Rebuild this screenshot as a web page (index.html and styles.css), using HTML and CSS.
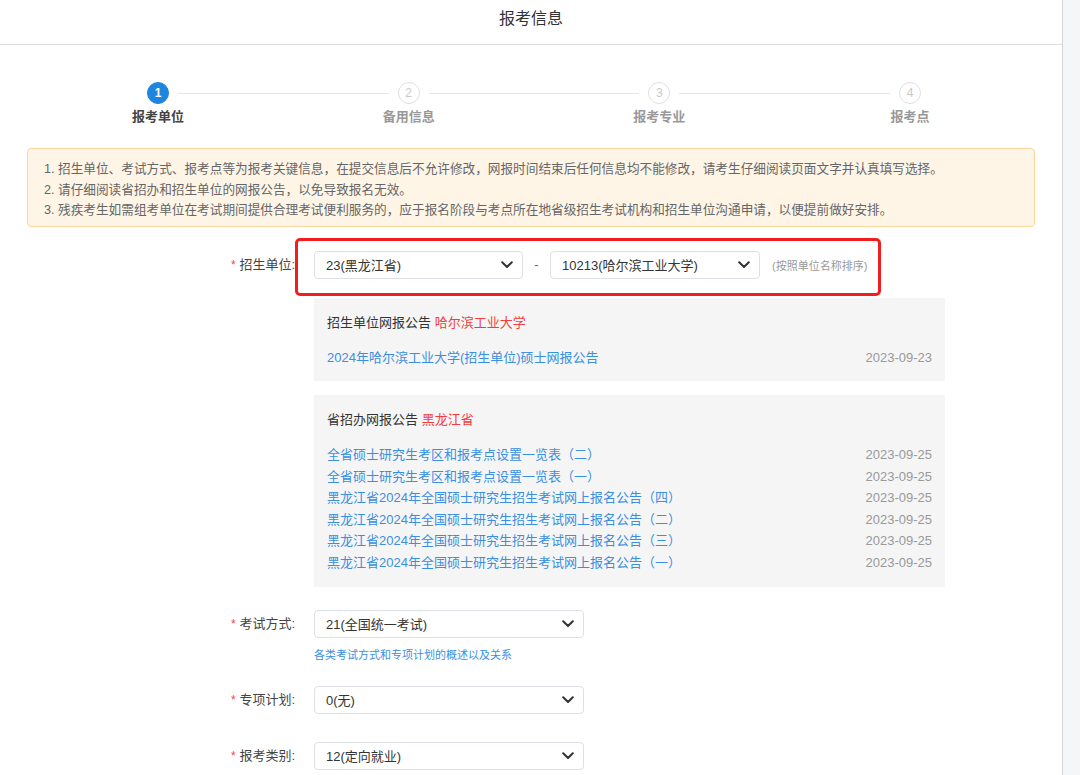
FILE: index.html
```html
<!DOCTYPE html>
<html lang="zh-CN">
<head>
<meta charset="utf-8">
<title>报考信息</title>
<link rel="stylesheet" href="styles.css">
</head>
<body>
<div class="shell">
  <div class="page">
    <header class="header">报考信息</header>

    <div class="steps">
      <div class="circle active">1</div>
      <div class="line"></div>
      <div class="circle">2</div>
      <div class="line"></div>
      <div class="circle">3</div>
      <div class="line"></div>
      <div class="circle">4</div>
      <div class="step-label active c1">报考单位</div>
      <div class="step-label c3">备用信息</div>
      <div class="step-label c5">报考专业</div>
      <div class="step-label c7">报考点</div>
    </div>

    <div class="notice">
      <p>1. 招生单位、考试方式、报考点等为报考关键信息，在提交信息后不允许修改，网报时间结束后任何信息均不能修改，请考生仔细阅读页面文字并认真填写选择。</p>
      <p>2. 请仔细阅读省招办和招生单位的网报公告，以免导致报名无效。</p>
      <p>3. 残疾考生如需组考单位在考试期间提供合理考试便利服务的，应于报名阶段与考点所在地省级招生考试机构和招生单位沟通申请，以便提前做好安排。</p>
    </div>

    <div class="form">
      <div class="row row-unit">
        <div class="label"><span class="req">*</span> 招生单位:</div>
        <div class="field inline">
          <div class="select s-prov"><span>23(黑龙江省)</span><svg class="chev" viewBox="0 0 12 8"><polyline points="1.2,1.2 6,6 10.8,1.2"/></svg></div>
          <span class="dash">-</span>
          <div class="select s-unit"><span>10213(哈尔滨工业大学)</span><svg class="chev" viewBox="0 0 12 8"><polyline points="1.2,1.2 6,6 10.8,1.2"/></svg></div>
          <span class="sort-hint">(按照单位名称排序)</span>
        </div>
        <div class="highlight"></div>
      </div>

      <div class="panels">
        <div class="panel">
          <div class="panel-title">招生单位网报公告 <span class="red">哈尔滨工业大学</span></div>
          <ul class="news">
            <li><a>2024年哈尔滨工业大学(招生单位)硕士网报公告</a><span class="date">2023-09-23</span></li>
          </ul>
        </div>
        <div class="panel">
          <div class="panel-title">省招办网报公告 <span class="red">黑龙江省</span></div>
          <ul class="news">
            <li><a>全省硕士研究生考区和报考点设置一览表（二）</a><span class="date">2023-09-25</span></li>
            <li><a>全省硕士研究生考区和报考点设置一览表（一）</a><span class="date">2023-09-25</span></li>
            <li><a>黑龙江省2024年全国硕士研究生招生考试网上报名公告（四）</a><span class="date">2023-09-25</span></li>
            <li><a>黑龙江省2024年全国硕士研究生招生考试网上报名公告（二）</a><span class="date">2023-09-25</span></li>
            <li><a>黑龙江省2024年全国硕士研究生招生考试网上报名公告（三）</a><span class="date">2023-09-25</span></li>
            <li><a>黑龙江省2024年全国硕士研究生招生考试网上报名公告（一）</a><span class="date">2023-09-25</span></li>
          </ul>
        </div>
      </div>

      <div class="row row-mode">
        <div class="label"><span class="req">*</span> 考试方式:</div>
        <div class="field">
          <div class="select s-wide"><span>21(全国统一考试)</span><svg class="chev" viewBox="0 0 12 8"><polyline points="1.2,1.2 6,6 10.8,1.2"/></svg></div>
          <a class="help">各类考试方式和专项计划的概述以及关系</a>
        </div>
      </div>

      <div class="row row-plan">
        <div class="label"><span class="req">*</span> 专项计划:</div>
        <div class="field">
          <div class="select s-wide"><span>0(无)</span><svg class="chev" viewBox="0 0 12 8"><polyline points="1.2,1.2 6,6 10.8,1.2"/></svg></div>
        </div>
      </div>

      <div class="row row-type">
        <div class="label"><span class="req">*</span> 报考类别:</div>
        <div class="field">
          <div class="select s-wide"><span>12(定向就业)</span><svg class="chev" viewBox="0 0 12 8"><polyline points="1.2,1.2 6,6 10.8,1.2"/></svg></div>
        </div>
      </div>
    </div>
  </div>
  <div class="scrollbar"></div>
</div>
</body>
</html>
```

FILE: styles.css
```css
* { box-sizing: border-box; }
html, body { margin: 0; padding: 0; }
body {
  font-family: "Liberation Sans", "Noto Sans CJK SC", sans-serif;
  color: #333;
  background: #fff;
  overflow: hidden;
}
.shell {
  display: flex;
  height: 775px;
}
.page {
  width: 1062px;
  flex: none;
}
.scrollbar {
  flex: 1;
  border-left: 1px solid #d2d3d6;
  background: #f5f6f8;
}

.header {
  height: 45px;
  border-bottom: 1px solid #dedede;
  text-align: center;
  font-size: 16px;
  line-height: 37px;
  color: #333;
}

/* steps */
.steps {
  display: grid;
  grid-template-columns: 22px 1fr 22px 1fr 22px 1fr 22px;
  grid-template-rows: 22px auto;
  align-items: center;
  margin: 37px 141px 0 147px;
  row-gap: 4px;
}
.circle {
  width: 22px;
  height: 22px;
  border-radius: 50%;
  border: 1px solid #e0e0e0;
  background: #fff;
  color: #c8c8c8;
  font-size: 12px;
  line-height: 20px;
  text-align: center;
  grid-row: 1;
}
.circle.active {
  background: #1f86e0;
  border-color: #1f86e0;
  color: #fff;
  font-weight: bold;
}
.line {
  height: 1px;
  background: #e6e6e6;
  margin: 0 9px;
  grid-row: 1;
}
.step-label {
  grid-row: 2;
  justify-self: center;
  white-space: nowrap;
  font-size: 13px;
  line-height: 18px;
  color: #999;
  font-weight: bold;
}
.step-label.active { color: #444; }
.c1 { grid-column: 1; }
.c3 { grid-column: 3; }
.c5 { grid-column: 5; }
.c7 { grid-column: 7; }

/* notice */
.notice {
  margin: 22px 27px 0 27px;
  background: #fef5e6;
  border: 1px solid #f9d89e;
  border-radius: 4px;
  padding: 10px 16px 5px;
}
.notice p {
  margin: 0;
  font-size: 12.65px;
  line-height: 20.5px;
  color: #666;
}

/* form */
.form {
  margin-top: 24px;
}
.row {
  display: flex;
  align-items: flex-start;
  position: relative;
}
.label {
  width: 314px;
  padding-right: 19px;
  text-align: right;
  font-size: 13px;
  line-height: 28px;
  color: #444;
  flex: none;
}
.req {
  color: #f04848;
  font-size: 12px;
}
.field { display: flex; flex-direction: column; }
.field.inline { flex-direction: row; align-items: center; }

.select {
  height: 28px;
  border: 1px solid #dcdfe6;
  border-radius: 4px;
  background: #fff;
  display: flex;
  align-items: center;
  justify-content: space-between;
  padding: 0 9px 0 11px;
  font-size: 13px;
  color: #333;
}
.chev {
  width: 12px;
  height: 8px;
  fill: none;
  stroke: #333;
  stroke-width: 2;
  stroke-linecap: round;
  stroke-linejoin: round;
}
.s-prov { width: 209px; }
.s-unit { width: 210px; }
.s-wide { width: 270px; }
.dash {
  width: 27px;
  text-align: center;
  font-size: 13px;
  color: #666;
}
.sort-hint {
  margin-left: 12px;
  font-size: 11px;
  color: #999;
}
.highlight {
  position: absolute;
  left: 295px;
  top: -13px;
  width: 586px;
  height: 58px;
  border: 3px solid #f21d1d;
  border-radius: 5px;
  pointer-events: none;
}

/* panels */
.panels {
  margin: 19px 0 0 314px;
  width: 631px;
  display: flex;
  flex-direction: column;
  gap: 14px;
}
.panel {
  background: #f5f5f5;
  padding: 15px 13px 13px;
}
.panel-title {
  font-size: 13px;
  line-height: 20px;
  color: #333;
}
.red { color: #f43c3c; }
.news {
  list-style: none;
  margin: 14px 0 0;
  padding: 0;
}
.news li {
  display: flex;
  justify-content: space-between;
  font-size: 13px;
  line-height: 21.6px;
}
.news a { color: #3b8fe0; }
.date { color: #999; }

.row-mode { margin-top: 23px; }
.help {
  margin-top: 9px;
  font-size: 11px;
  line-height: 16px;
  color: #3b8fe0;
}
.row-plan { margin-top: 23px; }
.row-type { margin-top: 28px; }
```
